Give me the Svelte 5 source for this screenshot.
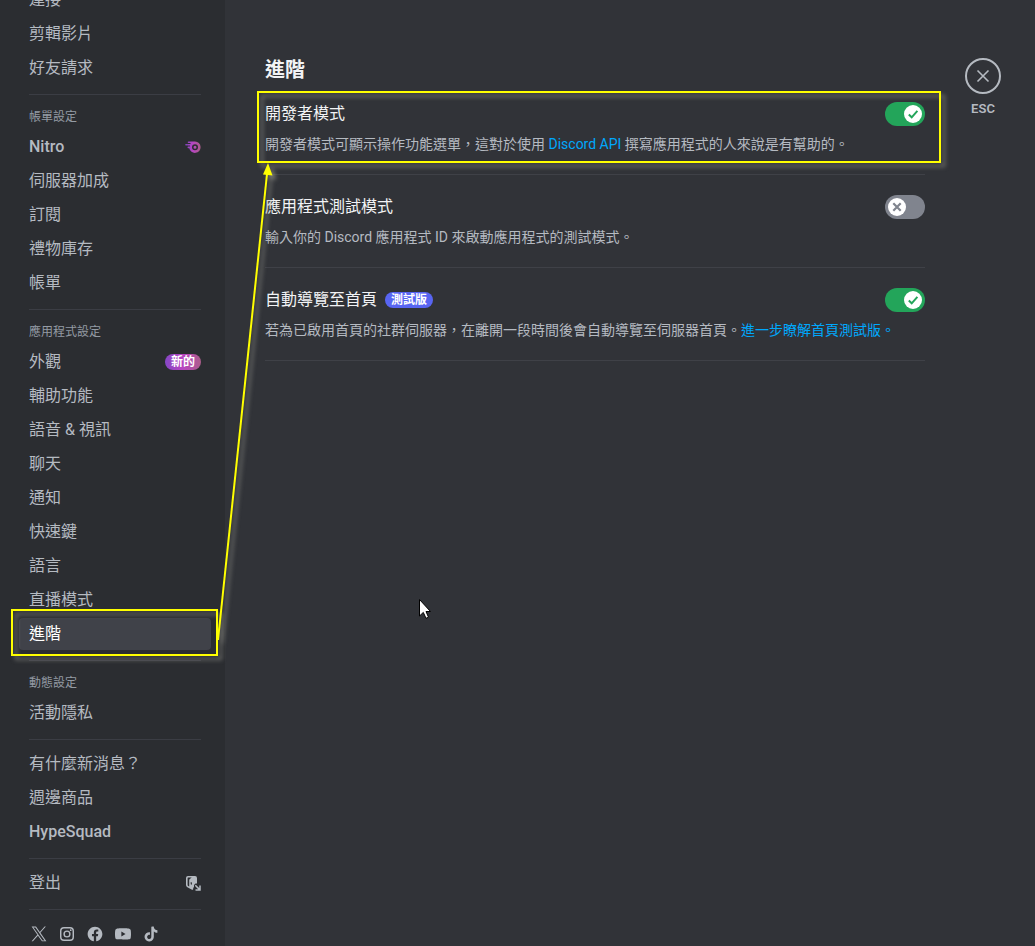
<script>
  const groups = [
    { items: [{ label: '連接' }, { label: '剪輯影片' }, { label: '好友請求' }] },
    {
      title: '帳單設定',
      items: [
        { label: 'Nitro', latin: true, icon: 'nitro' },
        { label: '伺服器加成' },
        { label: '訂閱' },
        { label: '禮物庫存' },
        { label: '帳單' }
      ]
    },
    {
      title: '應用程式設定',
      items: [
        { label: '外觀', badge: '新的' },
        { label: '輔助功能' },
        { label: '語音 & 視訊' },
        { label: '聊天' },
        { label: '通知' },
        { label: '快速鍵' },
        { label: '語言' },
        { label: '直播模式' },
        { label: '進階', selected: true }
      ]
    },
    { title: '動態設定', items: [{ label: '活動隱私' }] },
    { items: [{ label: '有什麼新消息？' }, { label: '週邊商品' }, { label: 'HypeSquad', latin: true }] },
    { items: [{ label: '登出', icon: 'logout' }] }
  ];

  let settings = $state([
    {
      id: 'developer',
      title: '開發者模式',
      on: true,
      before: '開發者模式可顯示操作功能選單，這對於使用 ',
      link: 'Discord API',
      after: ' 撰寫應用程式的人來說是有幫助的。'
    },
    {
      id: 'test',
      title: '應用程式測試模式',
      on: false,
      before: '輸入你的 Discord 應用程式 ID 來啟動應用程式的測試模式。'
    },
    {
      id: 'home',
      title: '自動導覽至首頁',
      tag: '測試版',
      on: true,
      before: '若為已啟用首頁的社群伺服器，在離開一段時間後會自動導覽至伺服器首頁。',
      link: '進一步瞭解首頁測試版。'
    }
  ]);

  const socials = [
    { name: 'X', view: '-1 -1 26 26', d: 'M14.258 10.152L23.176 0h-2.113l-7.747 8.813L7.133 0H0l9.352 13.328L0 23.973h2.113l8.176-9.309 6.531 9.309h7.133zm-2.895 3.293l-.949-1.328L2.875 1.56h3.246l6.086 8.523.945 1.328 7.91 11.078h-3.246z' },
    { name: 'Instagram', view: '0 0 24 24', d: 'M7.5 1.5h9a6 6 0 0 1 6 6v9a6 6 0 0 1-6 6h-9a6 6 0 0 1-6-6v-9a6 6 0 0 1 6-6zm0 2.2a3.8 3.8 0 0 0-3.8 3.8v9a3.8 3.8 0 0 0 3.8 3.8h9a3.8 3.8 0 0 0 3.8-3.8v-9a3.8 3.8 0 0 0-3.8-3.8zM12 6.6a5.4 5.4 0 1 1 0 10.800a5.4 5.4 0 0 1 0-10.800zm0 2.100a3.300 3.300 0 1 0 0 6.600a3.300 3.300 0 0 0 0-6.600zM17.600 5a1.300 1.300 0 1 1 0 2.600a1.300 1.300 0 0 1 0-2.600z' },
    { name: 'Facebook', view: '-1 -1 26 26', d: 'M24 12.073c0-6.627-5.373-12-12-12s-12 5.373-12 12c0 5.990 4.388 10.954 10.125 11.854v-8.385H7.078v-3.470h3.047V9.430c0-3.007 1.792-4.669 4.533-4.669 1.312 0 2.686.235 2.686.235v2.953H15.830c-1.491 0-1.956.925-1.956 1.874v2.250h3.328l-.532 3.470h-2.796v8.385C19.612 23.027 24 18.062 24 12.073z' },
    { name: 'YouTube', view: '0 0 24 24', d: 'M23.498 6.186a3.016 3.016 0 0 0-2.122-2.136C19.505 3.545 12 3.545 12 3.545s-7.505 0-9.377.505A3.017 3.017 0 0 0 .502 6.186C0 8.070 0 12 0 12s0 3.930.502 5.814a3.016 3.016 0 0 0 2.122 2.136c1.871.505 9.376.505 9.376.505s7.505 0 9.377-.505a3.015 3.015 0 0 0 2.122-2.136C24 15.930 24 12 24 12s0-3.930-.502-5.814zM9.545 15.568V8.432L15.818 12l-6.273 3.568z' },
    { name: 'TikTok', view: '-1 -1 26 26', d: 'M12.525.02c1.310-.020 2.610-.010 3.910-.020.080 1.530.630 3.090 1.750 4.170 1.120 1.110 2.700 1.620 4.240 1.790v4.030c-1.440-.050-2.890-.350-4.200-.970-.570-.260-1.100-.590-1.620-.930-.010 2.920.010 5.840-.020 8.750-.080 1.400-.540 2.790-1.350 3.940-1.310 1.920-3.580 3.170-5.910 3.210-1.430.080-2.860-.310-4.080-1.030-2.020-1.190-3.440-3.370-3.650-5.710-.020-.500-.030-1-.010-1.490.180-1.900 1.120-3.720 2.580-4.960 1.660-1.440 3.980-2.130 6.150-1.720.020 1.480-.040 2.960-.040 4.440-.990-.320-2.150-.230-3.020.370-.630.410-1.110 1.040-1.360 1.750-.210.510-.150 1.070-.140 1.610.240 1.640 1.820 3.020 3.500 2.870 1.120-.010 2.190-.660 2.770-1.610.190-.330.400-.670.410-1.060.100-1.790.060-3.570.070-5.360.010-4.030-.010-8.050.020-12.070z' }
  ];
</script>

<div class="settings" lang="zh-Hant">
  <nav class="sidebar" aria-label="使用者設定">
    {#each groups as group, i}
      {#if i > 0}<hr class="rule" />{/if}
      {#if group.title}<h3 class="group-title">{group.title}</h3>{/if}
      {#each group.items as item}
        <button type="button" class="item" class:selected={item.selected} class:latin={item.latin}>
          <span>{item.label}</span>
          {#if item.badge}<span class="badge new">{item.badge}</span>{/if}
          {#if item.icon === 'nitro'}
            <svg class="icon" viewBox="0 0 16 16" aria-hidden="true">
              <defs>
                <linearGradient id="nitro" x1="0" x2="1">
                  <stop offset="0" stop-color="#8547c6" />
                  <stop offset="0.5" stop-color="#b845c1" />
                  <stop offset="1" stop-color="#ab5d8a" />
                </linearGradient>
              </defs>
              <path
                fill="url(#nitro)"
                fill-rule="evenodd"
                d="M3.500 2.500H10A5.700 5.700 0 1 1 4.300 9.200H3.300A.8.8 0 0 1 3.300 7.600H5V6.500H2.800A.8.8 0 0 1 2.800 4.900H5.500V4.100H3.500A.8.8 0 0 1 3.500 2.500zM1 4.900h.4a.8.8 0 0 1 0 1.600H1a.8.8 0 0 1 0-1.600zM10 5.200a3 3 0 1 0 0 6 3 3 0 0 0 0-6zM10 6.700a1.500 1.500 0 1 1 0 3 1.500 1.500 0 0 1 0-3z"
              />
            </svg>
          {:else if item.icon === 'logout'}
            <svg class="icon" viewBox="0 0 16 16" aria-hidden="true">
              <path
                fill="currentColor"
                fill-rule="evenodd"
                d="M3 1h7a2 2 0 0 1 2 2v5.500h-1.500L9 10v2.300l-.8.500V14a.8.800 0 0 1-1.200.7L2.400 12.300A2.500 2.500 0 0 1 1 10V3a2 2 0 0 1 2-2zM2.600 3v7c0 .5.200.8.600 1l1 .6V5.200c0-.6.200-1 .6-1.300l1.900-1.400H3.100a.5.500 0 0 0-.5.500zM5.700 7v2.200l1.200.6V7.600z"
              />
              <path fill="none" stroke="currentColor" stroke-width="1.500" d="M10.300 10.300 14.600 14.600M15 10.500V15H10.500" />
            </svg>
          {/if}
        </button>
      {/each}
    {/each}
    <hr class="rule" />
    <div class="socials">
      {#each socials as s}
        <a href="#{s.name}" aria-label={s.name}>
          <svg viewBox={s.view} aria-hidden="true"><path fill="currentColor" fill-rule="evenodd" d={s.d} /></svg>
        </a>
      {/each}
    </div>
  </nav>

  <main class="content">
    <h2>進階</h2>
    {#each settings as s}
      <section class="setting">
        <div class="head">
          <label for={s.id}>{s.title}</label>
          {#if s.tag}<span class="badge beta">{s.tag}</span>{/if}
          <span class="switch">
            <input id={s.id} type="checkbox" role="switch" bind:checked={s.on} />
            <svg class="knob" viewBox="0 0 18 18" aria-hidden="true">
              <circle cx="9" cy="9" r="9" fill="#fff" />
              {#if s.on}
                <path d="M4.800 9.600 7.700 12.300 13.400 5.900" fill="none" stroke="#23a55a" stroke-width="2" />
              {:else}
                <path d="M5.300 5.300 12.700 12.700M12.700 5.300 5.300 12.700" fill="none" stroke="#80848e" stroke-width="2.200" />
              {/if}
            </svg>
          </span>
        </div>
        <p>{s.before}{#if s.link}<a href="#{s.id}">{s.link}</a>{/if}{s.after ?? ''}</p>
      </section>
    {/each}
  </main>

  <aside class="tools">
    <button type="button" class="close" aria-label="關閉">
      <svg viewBox="0 0 18 18" aria-hidden="true">
        <path d="M3.500 3.500 14.500 14.500M14.500 3.500 3.500 14.500" fill="none" stroke="currentColor" stroke-width="1.600" />
      </svg>
    </button>
    <span>ESC</span>
  </aside>

  <svg class="overlay" width="1035" height="946" viewBox="0 0 1035 946" aria-hidden="true">
    <g class="marks">
      <rect x="258" y="92" width="682" height="70" />
      <rect x="12" y="610" width="205" height="45" />
      <path d="M218 640 267 174" />
      <path class="tip" d="M268 163 272.500 175.500 263 174.500z" />
    </g>
    <path class="pointer" d="M419.500 599.500V616L423.300 612.400 426 618.300 428.500 617.200 426 611.500H430.500z" />
  </svg>
</div>

<style>
  :global(body) {
    margin: 0;
    background: #313338;
  }

  .settings {
    position: relative;
    display: flex;
    height: 100vh;
    overflow: hidden;
    background: #313338;
    color: #b5bac1;
    font-family: Roboto, 'Noto Sans CJK TC', sans-serif;
    font-size: 16px;
    line-height: 20px;
  }

  button {
    border: 0;
    background: none;
    color: inherit;
    font: inherit;
    cursor: pointer;
  }

  a {
    color: #00a8fc;
    text-decoration: none;
  }

  .sidebar {
    box-sizing: border-box;
    flex: 0 0 225px;
    height: calc(100% + 16px);
    padding: 0 14px 0 19px;
    margin-top: -16px;
    background: #2b2d31;
    overflow: hidden;
  }

  .item {
    display: flex;
    align-items: center;
    justify-content: space-between;
    width: 100%;
    height: 32px;
    margin: 0 0 2px;
    padding: 0 10px;
    border-radius: 4px;
    text-align: left;
    white-space: nowrap;
  }

  .item.latin {
    font-weight: 500;
  }

  .item.selected {
    background: #404249;
    color: #fff;
  }

  .rule {
    height: 1px;
    margin: 10px 10px 8px;
    border: 0;
    background: #3b3d44;
  }

  .group-title {
    box-sizing: border-box;
    height: 28px;
    margin: 0;
    padding: 4px 10px;
    color: #949ba4;
    font-size: 12px;
    font-weight: 400;
  }

  .icon {
    width: 16px;
    height: 16px;
  }

  .badge {
    height: 16px;
    border-radius: 8px;
    color: #fff;
    font-size: 12px;
    font-weight: 700;
    line-height: 16px;
  }

  .new {
    padding: 0 6px;
    background: linear-gradient(90deg, #8547c6, #b845c1 50%, #ab5d8a);
  }

  .beta {
    padding: 0 6px;
    margin-left: 8px;
    background: #5865f2;
  }

  .socials {
    display: flex;
    gap: 12px;
    padding: 8px 12px;
  }

  .socials a {
    width: 16px;
    height: 16px;
    color: #b5bac1;
  }

  .socials svg {
    display: block;
    width: 16px;
    height: 16px;
  }

  .content {
    box-sizing: border-box;
    flex: 1 1 auto;
    max-width: 740px;
    padding: 60px 40px;
  }

  h2 {
    margin: 0 0 22px;
    color: #f2f3f5;
    font-size: 20px;
    font-weight: 700;
    line-height: 20px;
  }

  .setting {
    padding-bottom: 20px;
    margin-bottom: 20px;
    border-bottom: 1px solid #3f4147;
  }

  .head {
    display: flex;
    align-items: center;
    height: 24px;
    color: #f2f3f5;
  }

  .switch {
    display: grid;
    align-items: center;
    margin-left: auto;
  }

  .switch input {
    grid-area: 1 / 1;
    appearance: none;
    width: 40px;
    height: 24px;
    margin: 0;
    border-radius: 12px;
    background: #80848e;
    cursor: pointer;
  }

  .switch input:checked {
    background: #23a55a;
  }

  .knob {
    grid-area: 1 / 1;
    width: 18px;
    height: 18px;
    margin-left: 3px;
    pointer-events: none;
  }

  input:checked + .knob {
    margin-left: 19px;
  }

  p {
    margin: 8px 0 0;
    font-size: 14px;
    line-height: 20px;
  }

  .tools {
    display: flex;
    flex: 0 0 36px;
    flex-direction: column;
    align-items: center;
    gap: 5px;
    padding-top: 58px;
    margin-right: 34px;
    font-size: 13px;
    font-weight: 600;
  }

  .close {
    display: grid;
    place-items: center;
    box-sizing: border-box;
    width: 36px;
    height: 36px;
    padding: 0;
    border: 2px solid #b5bac1;
    border-radius: 50%;
  }

  .close svg {
    width: 18px;
    height: 18px;
  }

  .overlay {
    position: absolute;
    top: 0;
    left: 0;
    pointer-events: none;
  }

  .marks {
    fill: none;
    stroke: #ff0;
    stroke-width: 2;
    filter: drop-shadow(4px 4px 2px rgb(140 140 134 / 0.75));
  }

  .marks .tip {
    fill: #ff0;
    stroke: none;
  }

  .pointer {
    fill: #fff;
    stroke: #000;
  }
</style>
